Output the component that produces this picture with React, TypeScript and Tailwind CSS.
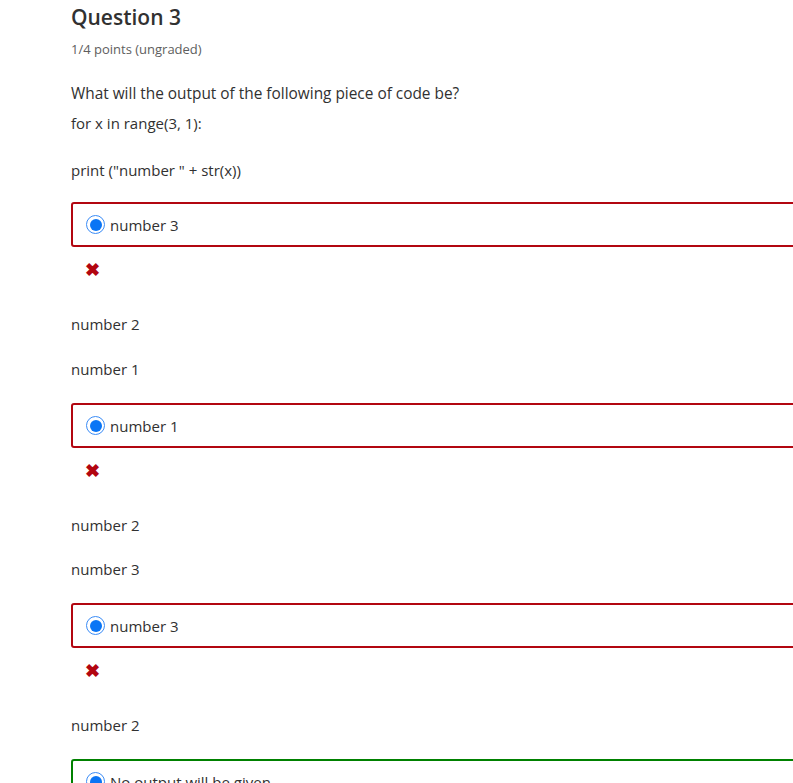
import React from 'react';

type Block = {
    answer: string;
    correct: boolean;
    lines: string[];
};

const blocks: Block[] = [
    { answer: 'number 3', correct: false, lines: ['number 2', 'number 1'] },
    { answer: 'number 1', correct: false, lines: ['number 2', 'number 3'] },
    { answer: 'number 3', correct: false, lines: ['number 2'] },
    { answer: 'No output will be given', correct: true, lines: [] },
];

function Radio() {
    return (
        <span className="flex h-[19px] w-[19px] shrink-0 items-center justify-center rounded-full border-[1.5px] border-[#3b8cf6] bg-white">
            <span className="h-[12px] w-[12px] rounded-full bg-[#0a75f5]" />
        </span>
    );
}

function AnswerBox({ block }: { block: Block }) {
    return (
        <div
            className={`flex h-[45px] w-[760px] items-center gap-[5px] rounded-[3px] border-2 pl-[13px] ${
                block.correct ? 'border-[#008100]' : 'border-[#b20610]'
            }`}
        >
            <Radio />
            <span className="text-[15px] leading-[22px]">{block.answer}</span>
        </div>
    );
}

export default function App() {
    return (
        <div
            className="h-[783px] w-[793px] overflow-hidden bg-white pl-[71px] text-[#313131]"
            style={{ fontFamily: '"Open Sans", "Noto Sans", sans-serif' }}
        >
            <h2 className="mt-[2px] h-[30px] text-[21px] font-semibold leading-[30px] text-[#313131]">
                Question 3
            </h2>
            <div className="mt-[7px] h-[20px] text-[13px] leading-[20px] text-[#5e5e5e]">
                1/4 points (ungraded)
            </div>

            <p className="mt-[24px] h-[22px] text-[15.4px] leading-[22px]">
                What will the output of the following piece of code be?
            </p>
            <p className="mt-[7px] h-[22px] text-[15px] leading-[22px]">for x in range(3, 1):</p>
            <p className="mt-[25px] h-[22px] text-[15px] leading-[22px]">print ("number " + str(x))</p>

            <div className="mt-[21px]">
                {blocks.map((block, index) => (
                    <React.Fragment key={index}>
                        <AnswerBox block={block} />
                        {!block.correct && (
                            <div className="flex h-[44px] items-center pl-[14px]">
                                <span className="text-[18px] font-bold leading-none text-[#b20610]">✖</span>
                            </div>
                        )}
                        {block.lines.map((line, i) => (
                            <p
                                key={i}
                                className={`h-[22px] text-[15px] leading-[22px] ${
                                    i === 1 && index === 0 ? 'mt-[23px]' : 'mt-[22px]'
                                }`}
                            >
                                {line}
                            </p>
                        ))}
                        {!block.correct && <div className="h-[23px]" />}
                    </React.Fragment>
                ))}
            </div>
        </div>
    );
}
